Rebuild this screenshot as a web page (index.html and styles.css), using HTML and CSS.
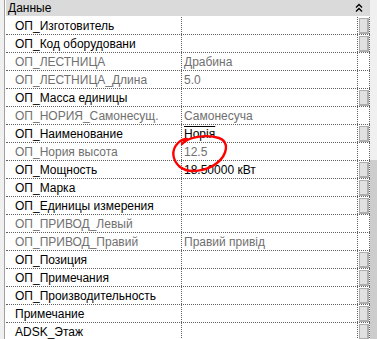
FILE: index.html
```html
<!DOCTYPE html>
<html lang="ru">
<head>
<meta charset="utf-8">
<title>Данные</title>
<link rel="stylesheet" href="styles.css">
</head>
<body>
<div class="panel">
  <div class="gutter"></div>
  <div class="main">
    <div class="header">
      <span class="header-title">Данные</span>
      <svg class="collapse" width="8" height="9" viewBox="0 0 8 9"><path d="M1 4.5 L4 1.5 L7 4.5 M1 8.5 L4 5.5 L7 8.5" fill="none" stroke="#000" stroke-width="1.4"/></svg>
    </div>
    <div class="rows">
      <div class="row"><div class="name">ОП_Изготовитель</div><div class="value"></div><div class="btncell"><span class="btn"></span></div></div>
      <div class="row"><div class="name">ОП_Код оборудовани</div><div class="value"></div><div class="btncell"><span class="btn"></span></div></div>
      <div class="row ro"><div class="name">ОП_ЛЕСТНИЦА</div><div class="value">Драбина</div><div class="btncell"></div></div>
      <div class="row ro"><div class="name">ОП_ЛЕСТНИЦА_Длина</div><div class="value">5.0</div><div class="btncell"></div></div>
      <div class="row"><div class="name">ОП_Масса единицы</div><div class="value"></div><div class="btncell"><span class="btn"></span></div></div>
      <div class="row ro"><div class="name">ОП_НОРИЯ_Самонесущ.</div><div class="value">Самонесуча</div><div class="btncell"></div></div>
      <div class="row"><div class="name">ОП_Наименование</div><div class="value"><span class="edited">Норія</span></div><div class="btncell"><span class="btn"></span></div></div>
      <div class="row ro"><div class="name">ОП_Нория высота</div><div class="value">12.5</div><div class="btncell"></div></div>
      <div class="row"><div class="name">ОП_Мощность</div><div class="value">18.50000 кВт</div><div class="btncell"><span class="btn"></span></div></div>
      <div class="row"><div class="name">ОП_Марка</div><div class="value"></div><div class="btncell"><span class="btn"></span></div></div>
      <div class="row"><div class="name">ОП_Единицы измерения</div><div class="value"></div><div class="btncell"><span class="btn"></span></div></div>
      <div class="row ro"><div class="name">ОП_ПРИВОД_Левый</div><div class="value"></div><div class="btncell"></div></div>
      <div class="row ro"><div class="name">ОП_ПРИВОД_Правий</div><div class="value">Правий привід</div><div class="btncell"></div></div>
      <div class="row"><div class="name">ОП_Позиция</div><div class="value"></div><div class="btncell"><span class="btn"></span></div></div>
      <div class="row"><div class="name">ОП_Примечания</div><div class="value"></div><div class="btncell"><span class="btn"></span></div></div>
      <div class="row"><div class="name">ОП_Производительность</div><div class="value"></div><div class="btncell"><span class="btn"></span></div></div>
      <div class="row"><div class="name">Примечание</div><div class="value"></div><div class="btncell"><span class="btn"></span></div></div>
      <div class="row"><div class="name">ADSK_Этаж</div><div class="value"></div><div class="btncell"><span class="btn"></span></div></div>
    </div>
  </div>
  <div class="scrollbar"><div class="thumb"></div></div>
  <svg class="scribble" width="377" height="339" viewBox="0 0 377 339"><path d="M182 144 C 188 137, 206 134, 219 138 C 230 142, 227 155, 217 163 C 207 171, 189 174, 180 167 C 172 160, 171 150, 178 143 C 181 140, 184 139, 187 139" fill="none" stroke="#f00" stroke-width="2.4" stroke-linecap="round"/></svg>
</div>
</body>
</html>
```
FILE: styles.css
```css
html, body {
  margin: 0;
  padding: 0;
  background: #fff;
}
body {
  font-family: "Liberation Sans", Arial, sans-serif;
  font-size: 12px;
  color: #000;
}
.panel {
  position: relative;
  display: flex;
  width: 377px;
  height: 339px;
  overflow: hidden;
}
.gutter {
  width: 4px;
  background: #f0f0f0;
  border-right: 1px solid #a0a0a0;
  flex: none;
}
.main {
  width: 365px;
  flex: none;
  display: flex;
  flex-direction: column;
  padding-left: 1px;
  box-sizing: border-box;
}
.header {
  height: 16px;
  margin-bottom: 1px;
  background: #dadada;
  display: flex;
  align-items: center;
  justify-content: space-between;
  flex: none;
}
.header-title {
  padding-left: 2px;
  line-height: 16px;
}
.collapse {
  margin-right: 7px;
  margin-top: -1px;
}
.rows {
  display: flex;
  flex-direction: column;
}
.row {
  display: flex;
  height: 18px;
  box-sizing: border-box;
  border-bottom: 1px dotted #606060;
  flex: none;
}
.name {
  width: 176px;
  box-sizing: border-box;
  border-right: 1px dotted #606060;
  padding-left: 9px;
  line-height: 18px;
  white-space: nowrap;
  overflow: hidden;
}
.value {
  width: 176px;
  box-sizing: border-box;
  border-right: 1px dotted #606060;
  padding-left: 2px;
  line-height: 18px;
  white-space: nowrap;
  overflow: hidden;
}
.btncell {
  width: 12px;
  box-sizing: border-box;
  border-right: 1px dotted #606060;
  padding: 1px 0 0 1px;
}
.btn {
  display: block;
  width: 10px;
  height: 16px;
  box-sizing: border-box;
  background: #e1e1e1;
  border: 2px solid #adadad;
  border-top-width: 1px;
  border-left-width: 1px;
}
.ro .name,
.ro .value {
  color: #707070;
}
.edited {
  text-decoration: overline;
  text-decoration-thickness: 1px;
}
.scrollbar {
  width: 7px;
  flex: none;
  background: #f0f0f0;
  display: flex;
  flex-direction: column;
  padding-top: 160px;
  box-sizing: border-box;
}
.thumb {
  flex: 1;
  background: #cdcdcd;
}
.scribble {
  position: absolute;
  left: 0;
  top: 0;
  pointer-events: none;
}
```
